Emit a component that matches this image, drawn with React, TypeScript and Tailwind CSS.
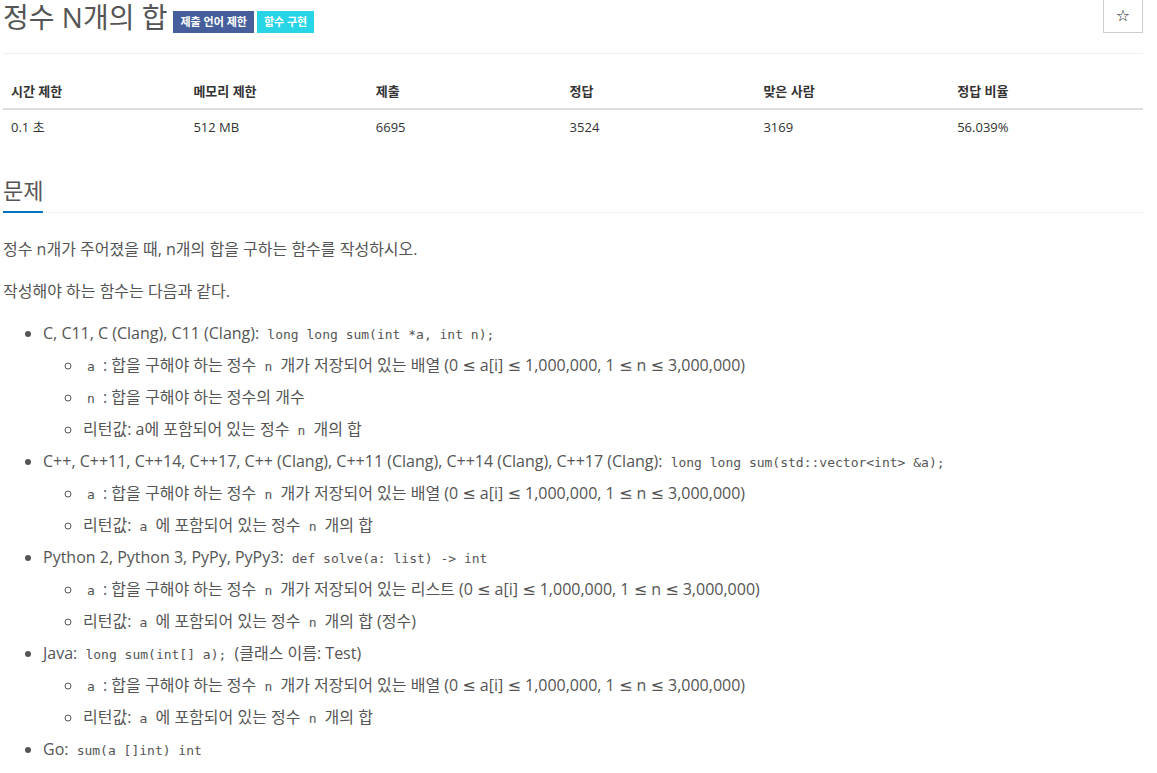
import React from 'react';

function C({ children }: { children: React.ReactNode }) {
  return (
    <code className="font-['DejaVu_Sans_Mono',monospace] text-[13px] leading-none px-1 text-[#555]">
      {children}
    </code>
  );
}

// the ≤ in the reference is wider than Open Sans' glyph
const Le = () => <span className="font-['DejaVu_Sans',sans-serif] leading-none">≤</span>;

const Range = () => (
  <>
    {' '}(0 <Le /> a[i] <Le /> 1,000,000, 1 <Le /> n <Le /> 3,000,000)
  </>
);

const stats = [
  { label: '시간 제한', value: '0.1 초', w: 'w-[16%]' },
  { label: '메모리 제한', value: '512 MB', w: 'w-[16%]' },
  { label: '제출', value: '6695', w: 'w-[17%]' },
  { label: '정답', value: '3524', w: 'w-[17%]' },
  { label: '맞은 사람', value: '3169', w: 'w-[17%]' },
  { label: '정답 비율', value: '56.039%', w: 'w-[17%]' },
];

export default function App() {
  return (
    <div className="w-[1140px] ml-[3px] font-['Open_Sans','Noto_Sans_CJK_KR',sans-serif] text-[#555]">
      {/* Header */}
      <div className="flex justify-between h-[54px] border-b border-[#eee]">
        <div className="flex items-start">
          <h1 className="text-[28px] leading-[34px] text-[#555] font-normal">정수 N개의 합</h1>
          <div className="flex gap-[3px] ml-[6px] mt-[11px]">
            <span className="h-[22px] px-[7px] flex items-center bg-[#465f9c] text-white text-[11px] font-bold">
              <span>제출 언어 제한</span>
            </span>
            <span className="h-[22px] px-[7px] flex items-center bg-[#27d5e7] text-white text-[11px] font-bold">
              <span>함수 구현</span>
            </span>
          </div>
        </div>
        <button className="w-[40px] h-[33px] border-x border-b border-[#ccc] bg-white text-[16px] leading-none text-[#222] font-['DejaVu_Sans',sans-serif]">
          ☆
        </button>
      </div>

      {/* Stats table */}
      <table className="w-full mt-[20px] mb-[32px] border-collapse text-[13px] text-[#333]">
        <thead>
          <tr>
            {stats.map((s) => (
              <th
                key={s.label}
                className={`${s.w} text-left font-bold px-2 py-2 leading-[18px] border-b-2 border-[#ddd]`}
              >
                {s.label}
              </th>
            ))}
          </tr>
        </thead>
        <tbody>
          <tr>
            {stats.map((s) => (
              <td key={s.label} className="px-2 py-2 leading-[18px]">
                {s.value}
              </td>
            ))}
          </tr>
        </tbody>
      </table>

      {/* Section headline */}
      <div className="border-b border-dotted border-[#dfe3ea]">
        <h2 className="inline-block text-[22px] leading-[28px] pb-[7px] border-b-2 border-[#0076c0] mb-[-1px] text-[#555]">
          문제
        </h2>
      </div>

      <div className="mt-[20px] text-[16px] leading-[32px]">
        <p className="mb-[10px]">정수 n개가 주어졌을 때, n개의 합을 구하는 함수를 작성하시오.</p>
        <p className="mb-[10px]">작성해야 하는 함수는 다음과 같다.</p>

        <ul className="list-disc pl-10">
          <li>
            C, C11, C (Clang), C11 (Clang): <C>long long sum(int *a, int n);</C>
            <ul className="list-[circle] pl-10">
              <li>
                <C>a</C> : 합을 구해야 하는 정수 <C>n</C> 개가 저장되어 있는 배열<Range />
              </li>
              <li>
                <C>n</C> : 합을 구해야 하는 정수의 개수
              </li>
              <li>
                리턴값: a에 포함되어 있는 정수 <C>n</C> 개의 합
              </li>
            </ul>
          </li>
          <li>
            C++, C++11, C++14, C++17, C++ (Clang), C++11 (Clang), C++14 (Clang), C++17 (Clang):{' '}
            <C>long long sum(std::vector&lt;int&gt; &amp;a);</C>
            <ul className="list-[circle] pl-10">
              <li>
                <C>a</C> : 합을 구해야 하는 정수 <C>n</C> 개가 저장되어 있는 배열<Range />
              </li>
              <li>
                리턴값: <C>a</C> 에 포함되어 있는 정수 <C>n</C> 개의 합
              </li>
            </ul>
          </li>
          <li>
            Python 2, Python 3, PyPy, PyPy3: <C>def solve(a: list) -&gt; int</C>
            <ul className="list-[circle] pl-10">
              <li>
                <C>a</C> : 합을 구해야 하는 정수 <C>n</C> 개가 저장되어 있는 리스트<Range />
              </li>
              <li>
                리턴값: <C>a</C> 에 포함되어 있는 정수 <C>n</C> 개의 합 (정수)
              </li>
            </ul>
          </li>
          <li>
            Java: <C>long sum(int[] a);</C> (클래스 이름: Test)
            <ul className="list-[circle] pl-10">
              <li>
                <C>a</C> : 합을 구해야 하는 정수 <C>n</C> 개가 저장되어 있는 배열<Range />
              </li>
              <li>
                리턴값: <C>a</C> 에 포함되어 있는 정수 <C>n</C> 개의 합
              </li>
            </ul>
          </li>
          <li>
            Go: <C>sum(a []int) int</C>
            <ul className="list-[circle] pl-10">
              <li>
                <C>a</C> : 합을 구해야 하는 정수 <C>n</C> 개가 저장되어 있는 슬라이스<Range />
              </li>
              <li>
                리턴값: <C>a</C> 에 포함되어 있는 정수 <C>n</C> 개의 합
              </li>
            </ul>
          </li>
        </ul>
      </div>
    </div>
  );
}
